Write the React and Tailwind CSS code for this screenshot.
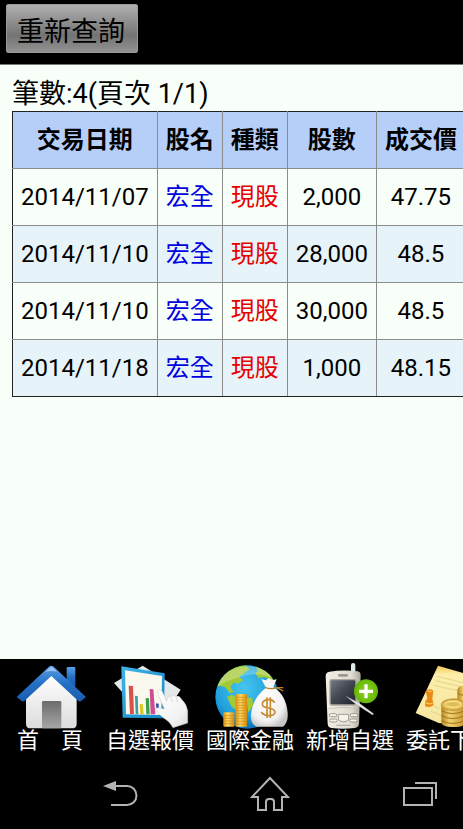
import React from 'react';

const columns = ['交易日期', '股名', '種類', '股數', '成交價'];

const rows = [
  ['2014/11/07', '宏全', '現股', '2,000', '47.75'],
  ['2014/11/10', '宏全', '現股', '28,000', '48.5'],
  ['2014/11/10', '宏全', '現股', '30,000', '48.5'],
  ['2014/11/18', '宏全', '現股', '1,000', '48.15'],
];

const cellColors = ['text-black', 'text-[#0000e0]', 'text-[#e60000]', 'text-black', 'text-black'];

function IconFrame({ children }) {
  return (
    <svg viewBox="0 12 300 210" className="block h-[70px] w-full" aria-hidden="true">
      {children}
    </svg>
  );
}

function HouseIcon() {
  return (
    <IconFrame>
      <defs>
        <linearGradient id="roof" x1="0" y1="0" x2="0" y2="1">
          <stop offset="0" stopColor="#5a9fe4" />
          <stop offset="0.5" stopColor="#2470c4" />
          <stop offset="1" stopColor="#1a5cb0" />
        </linearGradient>
        <linearGradient id="wall" x1="0" y1="0" x2="0" y2="1">
          <stop offset="0" stopColor="#ffffff" />
          <stop offset="1" stopColor="#dcdcdc" />
        </linearGradient>
        <linearGradient id="door" x1="0" y1="0" x2="0" y2="1">
          <stop offset="0" stopColor="#6c6c6c" />
          <stop offset="1" stopColor="#a6a6a6" />
        </linearGradient>
      </defs>
      <rect x="200" y="36" width="26" height="60" rx="4" fill="url(#roof)" />
      <path d="M154 60 L78 126 V206 Q78 220 92 220 H216 Q230 220 230 206 V126 Z" fill="url(#wall)" />
      <path d="M146 36 Q154 29 162 36 L258 126 L242 139 Q239 141 235 138 L154 63 L73 138 Q69 141 66 139 L50 126 Z" fill="url(#roof)" />
      <path d="M149 38 Q154 34 159 38 L172 50 Q154 46 136 50 Z" fill="#a9d0f5" opacity="0.8" />
      <rect x="126" y="138" width="58" height="82" rx="4" fill="url(#door)" />
    </IconFrame>
  );
}

function ChartHandIcon() {
  return (
    <IconFrame>
      <defs>
        <linearGradient id="frame" x1="0" y1="0" x2="1" y2="1">
          <stop offset="0" stopColor="#40b4e8" />
          <stop offset="1" stopColor="#1687c4" />
        </linearGradient>
        <linearGradient id="hand" x1="0" y1="0" x2="1" y2="1">
          <stop offset="0" stopColor="#ffffff" />
          <stop offset="0.7" stopColor="#f2f2f2" />
          <stop offset="1" stopColor="#d8d8d8" />
        </linearGradient>
      </defs>
      <path d="M42 84 L128 32 L242 104 L228 126 L120 170 Z" fill="#e4e8ea" />
      <path d="M64 34 L194 55 L192 190 L68 188 Z" fill="url(#frame)" />
      <path d="M75 46 L186 63 L184 180 L78 178 Z" fill="#fbf8ed" />
      <path d="M86 92 L99 93 L102 177 H90 Z" fill="#d5534a" />
      <path d="M105 122 L113 123 L115 177 H107 Z" fill="#3f9aa6" />
      <path d="M119 148 L129 147 L131 178 H121 Z" fill="#d8c629" />
      <path d="M137 129 L147 130 L149 178 H139 Z" fill="#38a145" />
      <path d="M149 102 L160 103 L166 178 H152 Z" fill="#cf4e91" />
      <path d="M168 145 L176 146 V160 H169 Z" fill="#2b4aa8" />
      <path d="M173 109 Q177 101 186 108 L200 138 Q202 121 213 124 Q220 118 228 124 Q239 121 244 132 Q260 147 263 168 V204 L219 218 Q208 198 190 188 Q174 177 166 163 Q170 155 182 160 L193 162 L175 121 Z" fill="url(#hand)" stroke="#c4c4c4" strokeWidth="1.5" />
      <path d="M212 126 L218 141 M228 126 L233 141" fill="none" stroke="#ccc" strokeWidth="2" />
    </IconFrame>
  );
}

function GlobeMoneyIcon() {
  return (
    <IconFrame>
      <defs>
        <radialGradient id="sea" cx="0.45" cy="0.35" r="0.65">
          <stop offset="0" stopColor="#46c6ee" />
          <stop offset="0.7" stopColor="#209fdc" />
          <stop offset="1" stopColor="#0d70b6" />
        </radialGradient>
        <clipPath id="globe">
          <circle cx="141" cy="126" r="95" />
        </clipPath>
        <linearGradient id="gold" x1="0" y1="0" x2="1" y2="0">
          <stop offset="0" stopColor="#d99413" />
          <stop offset="0.4" stopColor="#ffdc68" />
          <stop offset="1" stopColor="#d88d0c" />
        </linearGradient>
        <radialGradient id="bag" cx="0.42" cy="0.4" r="0.65">
          <stop offset="0" stopColor="#ffffff" />
          <stop offset="0.75" stopColor="#f1f1f1" />
          <stop offset="1" stopColor="#c6c6c6" />
        </radialGradient>
      </defs>
      <circle cx="141" cy="126" r="95" fill="url(#sea)" />
      <g clipPath="url(#globe)" fill="#a3c936">
        <path d="M52 91 Q68 56 105 36 L137 30 L148 43 L129 57 L117 65 L130 76 L112 86 L102 82 L91 95 L101 111 L90 115 L76 97 Z" />
        <path d="M166 35 Q205 43 220 74 L211 76 L195 66 L176 69 L165 55 L174 48 Z" />
        <path d="M81 126 L95 119 L110 127 V166 L95 155 Z" />
        <path d="M139 128 L157 128 L159 151 L145 173 Z" />
      </g>
      <path d="M51 95 Q71 39 141 34 Q191 34 220 70 Q171 48 126 65 Q79 76 51 95 Z" fill="#fff" opacity="0.24" />
      <rect x="70" y="172" width="33" height="43" rx="3" fill="url(#gold)" />
      <rect x="107" y="117" width="34" height="98" rx="3" fill="url(#gold)" />
      <path d="M70 182h33M70 190h33M70 198h33M70 206h33M107 127h34M107 135h34M107 143h34M107 151h34M107 159h34M107 167h34M107 175h34M107 183h34M107 191h34M107 199h34M107 207h34" stroke="#c98212" strokeWidth="2" />
      <path d="M184 72 L196 76 L207 70 L218 75 L230 73 L220 96 Q259 121 263 174 Q265 203 249 215 H170 Q151 207 153 179 Q157 130 198 98 Z" fill="url(#bag)" />
      <path d="M195 97 Q211 104 230 98 L250 108 M228 98 L250 98" fill="none" stroke="#b9832d" strokeWidth="4" />
      <path d="M224 143 Q217 132 204 134 Q187 136 187 147 Q187 157 205 159 Q225 162 225 172 Q223 182 206 182 Q190 181 184 171 M201 127 V189 M211 127 V189" fill="none" stroke="#c68b2f" strokeWidth="5" />
    </IconFrame>
  );
}

function PhonePlusIcon() {
  return (
    <IconFrame>
      <defs>
        <linearGradient id="phone" x1="0" y1="0" x2="1" y2="0">
          <stop offset="0" stopColor="#f1eee5" />
          <stop offset="0.75" stopColor="#dfdbd1" />
          <stop offset="1" stopColor="#aaa69b" />
        </linearGradient>
        <linearGradient id="screen" x1="0" y1="0" x2="1" y2="1">
          <stop offset="0" stopColor="#737986" />
          <stop offset="0.45" stopColor="#454954" />
          <stop offset="1" stopColor="#20232b" />
        </linearGradient>
        <radialGradient id="plus">
          <stop offset="0" stopColor="#92d51d" />
          <stop offset="1" stopColor="#64b60b" />
        </radialGradient>
      </defs>
      <rect x="153" y="24" width="13" height="43" rx="6" fill="#dcebe4" />
      <path d="M88 50 Q130 44 173 49 Q182 50 182 62 L177 207 Q176 218 164 219 Q128 223 94 219 Q84 218 83 207 L77 63 Q77 52 88 50 Z" fill="url(#phone)" />
      <rect x="114" y="57" width="30" height="8" rx="4" fill="#9b9990" />
      <rect x="88" y="72" width="82" height="80" rx="7" fill="#aaa79f" />
      <rect x="92" y="76" width="74" height="72" rx="4" fill="url(#screen)" />
      <path d="M85 161 Q129 153 176 161" fill="none" stroke="#bcb8ad" strokeWidth="2" />
      <g fill="#f5f2ea" stroke="#918d83" strokeWidth="2.5">
        <rect x="88" y="176" width="22" height="9" rx="4" />
        <rect x="151" y="176" width="22" height="9" rx="4" />
        <rect x="89" y="192" width="22" height="9" rx="4" />
        <rect x="149" y="192" width="22" height="9" rx="4" />
        <path d="M115 178 H146 V194 Q131 207 115 194 Z" />
      </g>
      <path d="M109 211h43" stroke="#b6b2a8" strokeWidth="4" />
      <circle cx="198" cy="109" r="36" fill="url(#plus)" />
      <path d="M177 109h42M198 88v42" stroke="#fff" strokeWidth="10" />
      <path d="M138 124 L176 143 L221 176 L218 180 L170 149 Z" fill="#e6e6e6" stroke="#8d8d8d" strokeWidth="1" />
    </IconFrame>
  );
}

function OrderIcon() {
  return (
    <IconFrame>
      <defs>
        <linearGradient id="paper" x1="0" y1="0" x2="0" y2="1">
          <stop offset="0" stopColor="#f3c654" />
          <stop offset="0.15" stopColor="#fdefaa" />
          <stop offset="1" stopColor="#f5e6a0" />
        </linearGradient>
        <linearGradient id="coins" x1="0" y1="0" x2="1" y2="0">
          <stop offset="0" stopColor="#b68324" />
          <stop offset="0.35" stopColor="#f2d471" />
          <stop offset="1" stopColor="#c99932" />
        </linearGradient>
      </defs>
      <path d="M114 32 L236 68 L180 210 L116 204 L47 174 Z" fill="url(#paper)" />
      <path d="M111 64 L201 86 M106 77 L192 97 M101 91 L188 110 M101 154 L124 161 M93 169 L124 181" stroke="#e2d38e" strokeWidth="3" />
      <path d="M77 108 Q88 98 100 107 L97 131 L101 150 Q89 161 75 153 L76 139 L82 130 Z" fill="#e88916" />
      <path d="M83 110 Q90 106 95 111 M78 143 Q88 150 98 144" fill="none" stroke="#ffc24e" strokeWidth="4" />
      <path d="M172 104 Q174 94 190 92 H225 V190 H172 Z" fill="url(#coins)" />
      <path d="M124 148 Q125 134 162 130 Q193 134 193 148 V207 Q189 216 158 216 Q127 216 124 204 Z" fill="url(#coins)" />
      <ellipse cx="159" cy="149" rx="35" ry="17" fill="#e2bd57" stroke="#a9781f" strokeWidth="2" />
      <ellipse cx="159" cy="148" rx="23" ry="9" fill="none" stroke="#fff0a4" strokeWidth="3" />
      <path d="M125 167 Q155 184 193 168 M125 182 Q155 199 193 183 M125 197 Q155 213 193 198 M173 115 Q190 126 225 118" fill="none" stroke="#9e701c" strokeWidth="3" />
    </IconFrame>
  );
}

const shortcuts = [
  { label: '首　頁', Icon: HouseIcon },
  { label: '自選報價', Icon: ChartHandIcon },
  { label: '國際金融', Icon: GlobeMoneyIcon },
  { label: '新增自選', Icon: PhonePlusIcon },
  { label: '委託下單', Icon: OrderIcon },
];

function SystemNav() {
  const button = 'flex w-[150px] shrink-0 items-center justify-center';
  return (
    <nav aria-label="系統" className="flex h-[70px] overflow-hidden pl-[45px] text-[#b3b3b3]">
      <button type="button" aria-label="返回" className={button}>
        <svg width="36" height="28" viewBox="0 0 36 28" fill="none" stroke="currentColor" strokeWidth="2">
          <path d="M13 6 H25 A9 9 0 0 1 25 25 H9" />
          <path d="M1 6 L14 1 V11 Z" fill="currentColor" stroke="none" />
        </svg>
      </button>
      <button type="button" aria-label="主畫面" className={button}>
        <svg width="40" height="36" viewBox="0 0 40 36" fill="none" stroke="currentColor" strokeWidth="2">
          <path d="M20 2 L2 21 H8 V34 H16 V26 Q16 23 19 23 H21 Q24 23 24 26 V34 H32 V21 H38 Z" />
        </svg>
      </button>
      <button type="button" aria-label="最近使用" className={button}>
        <svg width="36" height="26" viewBox="0 0 36 26" fill="none" stroke="currentColor" strokeWidth="2">
          <rect x="2" y="7" width="28" height="17" />
          <path d="M13 2 H34 V18" />
        </svg>
      </button>
    </nav>
  );
}

export default function App() {
  return (
    <div className="flex min-h-screen flex-col overflow-hidden bg-black font-[Roboto,'Noto_Sans_CJK_TC',sans-serif]">
      <header className="h-[65px] border-b border-[#777] px-1.5 pt-1">
        <button
          type="button"
          className="h-[49px] rounded-xs border border-[#999] bg-linear-to-b from-[#b0b0b0] via-[#747474] via-65% to-[#929292] pt-1.5 pr-3 pl-2.5 text-[27px] leading-10 text-black"
        >
          重新查詢
        </button>
      </header>

      <main className="flex-1 overflow-hidden bg-[#f8fef8] pt-3 pl-3 text-black">
        <p className="pt-px text-[27px] leading-[33px] whitespace-nowrap">筆數:4(頁次 1/1)</p>
        <table className="border-collapse text-center text-2xl whitespace-nowrap">
          <thead>
            <tr className="h-[57px] bg-[#b6cff9]">
              {columns.map((name) => (
                <th
                  key={name}
                  scope="col"
                  className="border border-[#8c8c8c] border-t-[#222] px-2 py-0 font-bold first:border-l-[#222]"
                >
                  {name}
                </th>
              ))}
            </tr>
          </thead>
          <tbody>
            {rows.map((row, r) => (
              <tr key={r} className="group h-[57px] even:bg-[#e6f3f8]">
                {row.map((value, c) => (
                  <td
                    key={c}
                    className={`border border-[#8c8c8c] px-2 py-0 group-last:border-b-[#222] first:border-l-[#222] ${cellColors[c]}`}
                  >
                    {c === 1 ? <a href="#stock">{value}</a> : value}
                  </td>
                ))}
              </tr>
            ))}
          </tbody>
        </table>
      </main>

      <footer className="bg-black text-white">
        <nav aria-label="功能" className="flex h-[100px] overflow-hidden">
          {shortcuts.map(({ label, Icon }) => (
            <button key={label} type="button" className="flex w-[100px] shrink-0 flex-col items-center">
              <Icon />
              <span className="text-[22px] leading-6 whitespace-nowrap">{label}</span>
            </button>
          ))}
        </nav>
        <SystemNav />
      </footer>
    </div>
  );
}
